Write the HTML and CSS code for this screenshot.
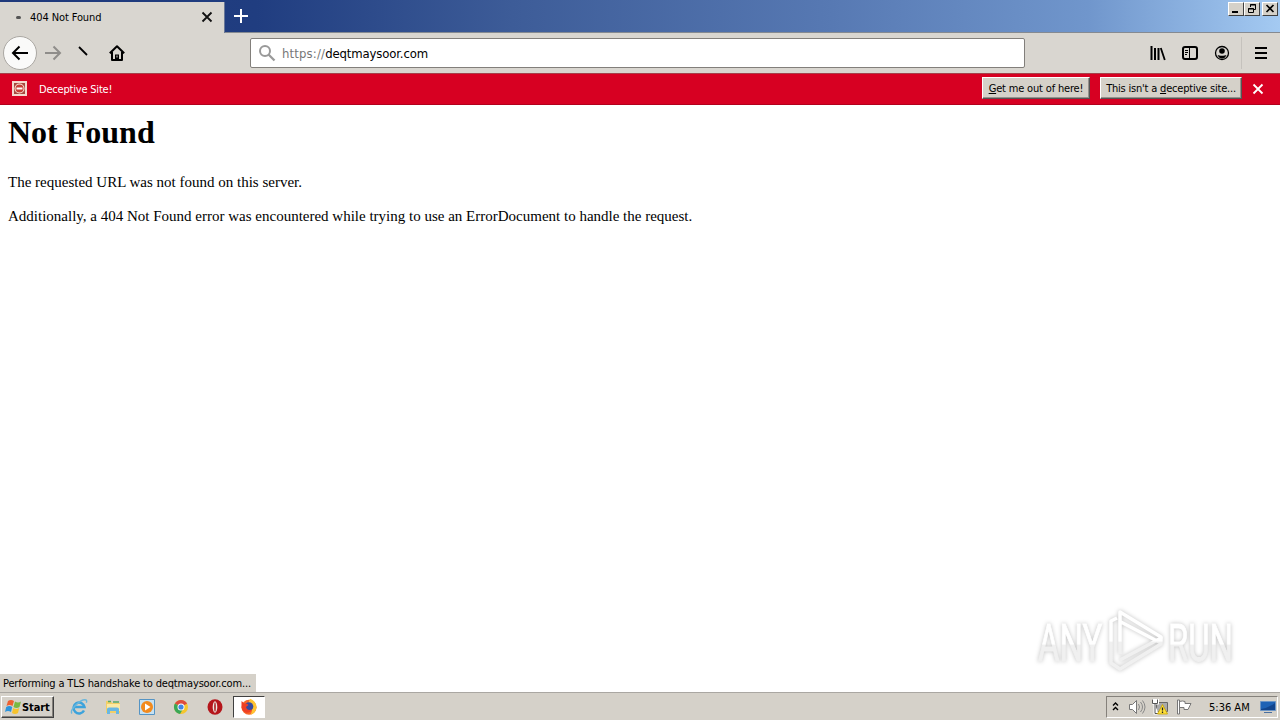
FILE: index.html
```
<!DOCTYPE html>
<html lang="en">
<head>
    <meta charset="UTF-8">
    <meta name="viewport" content="width=device-width, initial-scale=1.0">
    <title>404 Not Found</title>
    <link rel="stylesheet" href="styles.css">
</head>
<body>
    <div class="titlebar">
        <div class="tab">
            <span class="tab-dot"></span>
            <span class="tab-title">404 Not Found</span>
            <svg class="tab-close" width="12" height="12" viewBox="0 0 12 12"><path d="M1.5 1.5l9 9M10.5 1.5l-9 9" stroke="#111" stroke-width="1.8"/></svg>
        </div>
        <svg class="new-tab" width="14" height="14" viewBox="0 0 14 14"><path d="M7 0v14M0 7h14" stroke="#fff" stroke-width="2"/></svg>
        <div class="window-buttons">
            <span class="win-btn"><svg width="14" height="12" viewBox="0 0 14 12"><path d="M3 9h6" stroke="#000" stroke-width="2"/></svg></span>
            <span class="win-btn"><svg width="14" height="12" viewBox="0 0 14 12"><path d="M5.5 4V1.5h5v5H9M5 2h6M3.5 5.500h5v4h-5zM3 6h6" fill="none" stroke="#000"/></svg></span>
            <span class="win-btn win-close"><svg width="14" height="12" viewBox="0 0 14 12"><path d="M3.500 2l7 7M10.500 2l-7 7" stroke="#000" stroke-width="1.7"/></svg></span>
        </div>
    </div>

    <div class="toolbar">
        <span class="back-btn"><svg width="18" height="16" viewBox="0 0 18 16"><path d="M17 8H2M8.500 1.500L2 8l6.500 6.500" fill="none" stroke="#000" stroke-width="2"/></svg></span>
        <svg class="forward" width="18" height="16" viewBox="0 0 18 16"><path d="M1 8h15M9.500 1.500L16 8l-6.500 6.500" fill="none" stroke="#8f8d8a" stroke-width="2"/></svg>
        <svg class="reload" width="10" height="10" viewBox="0 0 10 10"><path d="M1 1l8 8" stroke="#000" stroke-width="1.8"/></svg>
        <svg class="home" width="16" height="16" viewBox="0 0 16 16"><path d="M.8 8.200L8 1.200l7.200 7M3 7v8h10V7" fill="none" stroke="#000" stroke-width="2" stroke-linejoin="round"/><path d="M6 15V9.500h4V15z"/><path d="M8 10.500v2" stroke="#d9d6d0"/></svg>
        <div class="urlbar">
            <svg width="18" height="18" viewBox="0 0 18 18"><circle cx="7" cy="7" r="5" fill="none" stroke="#999" stroke-width="2"/><path d="M10.500 10.500l6 6" stroke="#999" stroke-width="2.300"/></svg>
            <span class="url"><span class="scheme">https://</span><span class="host">deqtmaysoor.com</span></span>
        </div>
        <svg class="library" width="16" height="16" viewBox="0 0 16 16"><path d="M1.500 1v14M5 3v12M8.500 3v12" stroke="#000" stroke-width="2"/><path d="M10.800 3l4 12" stroke="#000" stroke-width="1.800"/></svg>
        <svg class="sidebar" width="16" height="14" viewBox="0 0 16 14"><rect x="1" y="1" width="14" height="12" rx="2" fill="none" stroke="#000" stroke-width="2"/><path d="M7.500 1v12M3 4.500h3M3 6.500h3M3 8.500h2" stroke="#000"/></svg>
        <svg class="account" width="16" height="16" viewBox="0 0 16 16"><circle cx="8" cy="8" r="6.500" fill="none" stroke="#000" stroke-width="1.300"/><circle cx="8" cy="6" r="2.800"/><path d="M3.500 10c2 1 7 1 9 0-1 2.500-2.500 3.500-4.500 3.500S4.500 12.500 3.500 10z"/></svg>
        <span class="separator"></span>
        <svg class="menu" width="12" height="12" viewBox="0 0 12 12"><path d="M0 1h12M0 6h12M0 11h12" stroke="#000" stroke-width="2"/></svg>
    </div>

    <div class="notification">
        <svg class="blocked" width="15" height="15" viewBox="0 0 15 15"><path d="M0 0h15v15H0z" fill="#f3d8cf"/><path d="M2 2h11v11H2z" fill="#a8473f"/><circle cx="7.500" cy="7.500" r="5" fill="#fbe9df"/><circle cx="7.500" cy="7.500" r="4" fill="#c63c35"/><path d="M4.500 7.500h6" stroke="#fff" stroke-width="2"/></svg>
        <span class="notification-text">Deceptive Site!</span>
        <button class="notice-btn leave"><span><u>G</u>et me out of here!</span></button>
        <button class="notice-btn report"><span>This isn't a <u>d</u>eceptive site...</span></button>
        <svg class="notice-close" width="12" height="12" viewBox="0 0 12 12"><path d="M1.500 1.500l9 9M10.500 1.500l-9 9" stroke="#fff" stroke-width="1.800"/></svg>
    </div>

    <div class="page">
        <h1>Not Found</h1>
        <p class="line-one">The requested URL was not found on this server.</p>
        <p class="line-two">Additionally, a 404 Not Found error was encountered while trying to use an ErrorDocument to handle the request.</p>

        <div class="watermark">
            <span class="mark-text">ANY</span>
            <svg width="60" height="64" viewBox="0 0 60 64">
                <defs>
                    <linearGradient id="fade" gradientUnits="userSpaceOnUse" x1="0" y1="0" x2="0" y2="64">
                        <stop offset="0.5" stop-color="#fff"/>
                        <stop offset="0.52" stop-color="#f0f0f0"/>
                    </linearGradient>
                </defs>
                <g fill="none" stroke="url(#fade)" stroke-width="3.500" stroke-linejoin="round">
                    <path d="M13 45V3l41 25-2 5-38-20"/>
                    <path d="M10 9l-6 3v42l9 6 41-25v-6L13 51"/>
                </g>
            </svg>
            <span class="mark-text">RUN</span>
        </div>
        <div class="status"><span>Performing a TLS handshake to deqtmaysoor.com...</span></div>
    </div>

    <div class="taskbar">
        <div class="start">
            <svg width="17" height="16" viewBox="0 0 17 16"><path d="M3 2q3-2 6 0L7.500 7q-3-2-6 0z" fill="#ed6131"/><path d="M10 2.500q3 2 6 0L14.500 8q-3 2-6 0z" fill="#79b943"/><path d="M1.200 8q3-2 6 0L6 13q-3-2-6 0z" fill="#2b94dc"/><path d="M8.200 9q3 2 6 0L13 14q-3 2-6 0z" fill="#f6c32d"/></svg>
            <span>Start</span>
        </div>
        <div class="quick-launch">
            <svg width="18" height="18" viewBox="0 0 18 18"><path d="M14 12.500A5.500 5.500 0 1 1 14.500 9H5" fill="none" stroke="#3ca3dc" stroke-width="2.500"/><path d="M2 15.500C-1 12 11 .5 16 2c1 .5.800 1.500.3 2.700" fill="none" stroke="#69b6dc" stroke-width="1.400"/></svg>
            <svg width="18" height="18" viewBox="0 0 18 18"><path d="M2 3h5l1 2h8v10H2z" fill="#f2cf67"/><path d="M3 6h13v7H3z" fill="#fbe9a4"/><path d="M4 3.500h3M9 4h6" stroke="#58a866" stroke-width="1.500"/><path d="M3 16v-5q0-1.500 2-1.500h8q2 0 2 1.500v5h-3v-3H6v3z" fill="#69b7e3"/></svg>
            <svg width="18" height="18" viewBox="0 0 18 18"><path d="M1.500 1.500h15v15h-15z" fill="#c6e1f2" stroke="#5594c4"/><circle cx="9" cy="9" r="6" fill="#f28a1d"/><path d="M7 5.500v7L12.500 9z" fill="#fff"/></svg>
            <svg width="18" height="18" viewBox="0 0 18 18"><circle cx="9" cy="9" r="7" fill="#f5c62e"/><path d="M9 9L2.900 5.500a7 7 0 0 1 12.200 0z" fill="#dd4b3e"/><path d="M9 9L2.900 5.500A7 7 0 0 0 8 16l3-5z" fill="#3aa757"/><circle cx="9" cy="9" r="3.500" fill="#fff"/><circle cx="9" cy="9" r="2.600" fill="#4285e4"/></svg>
            <svg width="18" height="18" viewBox="0 0 18 18"><ellipse cx="9" cy="9" rx="7.500" ry="7.800" fill="#b5161b"/><ellipse cx="9" cy="9" rx="2.300" ry="5.800" fill="#eee8e2"/><ellipse cx="9" cy="9" rx=".8" ry="4.800" fill="#a61919"/></svg>
        </div>
        <div class="task-active">
            <svg width="18" height="18" viewBox="0 0 18 18"><circle cx="9" cy="9.300" r="7.500" fill="#f7662a"/><path d="M10 .8q7 3 6.500 9-1 6-6 7 4-7-2-12z" fill="#ffc431"/><circle cx="9" cy="8.500" r="4.300" fill="#374aa0"/><path d="M1.500 9V3l3 2.500q3-.5 4 1.500L6 9q1 4 6 2.500-2 4-6.500 3Q2 13 1.500 9z" fill="#ee3f24"/></svg>
        </div>
        <div class="tray">
            <svg class="chevrons" width="7" height="10" viewBox="0 0 7 10"><path d="M1 4.500L3.500 2 6 4.500M1 9l2.500-2.500L6 9" fill="none" stroke="#000" stroke-width="1.400"/></svg>
            <svg class="volume" width="18" height="16" viewBox="0 0 18 16"><path d="M1.500 5.500h3l4-4v13l-4-4h-3z" fill="#fff" stroke="#777"/><path d="M10.500 5q2 3 0 6M12.500 3q4 5 0 10M14.500 1.500q5 6.500 0 13" fill="none" stroke="#888"/></svg>
            <svg class="network" width="16" height="16" viewBox="0 0 16 16"><path d="M4.500 3.500h11v9h-11z" fill="#aaa" stroke="#666"/><path d="M1 1h5v3.500H1zM2.500 4.500v10h4" fill="#fff" stroke="#fff" stroke-width="2"/><path d="M.5.500v4h5v-4M3 4.500v10h4" fill="none" stroke="#555"/><path d="M10.500 5.500l5 9.500h-10z" fill="#ffe13b" stroke="#c5a100" stroke-width=".8"/><path d="M10.500 8.500v3M10.500 12.500v1.500" stroke="#222" stroke-width="1.300"/></svg>
            <svg class="flag" width="17" height="16" viewBox="0 0 17 16"><path d="M3 2.500q4-1 6 0v2h6l-3 6H8v-2H3z" fill="#fff" stroke="#777"/><path d="M1.500 1h2v14h-2z" fill="#fff" stroke="#777"/></svg>
            <span class="clock">5:36 AM</span>
            <svg class="desktop" width="16" height="14" viewBox="0 0 16 14"><path d="M.5 1.500h15v9H.5z" fill="#1e62b5" stroke="#6b94c5"/><path d="M1 9q7-1 14-6v7H1z" fill="#12458d"/><path d="M4 12.500h8" stroke="#4a6f9f"/></svg>
        </div>
    </div>
</body>
</html>
```
FILE: styles.css
```
* {
    box-sizing: border-box;
}

body {
    margin: 0;
    width: 1280px;
    height: 720px;
    overflow: hidden;
    display: flex;
    flex-direction: column;
    background-color: #fff;
    color: #000;
    font-family: Tahoma, 'DejaVu Sans Condensed', 'DejaVu Sans', sans-serif;
    font-size: 11px;
}

svg {
    display: block;
    flex: none;
}

span {
    white-space: nowrap;
}

.titlebar {
    height: 33px;
    flex: none;
    display: flex;
    align-items: flex-start;
    background-image: linear-gradient(90deg, #1f397b 0%, #203d80 20%, #3d5c98 40%, #5779b3 65%, #7096cc 85%, #a4caf2 100%);
    border-bottom: 1px solid #858a91;
}

.tab {
    width: 225px;
    height: 31px;
    margin-top: 2px;
    padding: 0 11px 1px 16px;
    display: flex;
    align-items: center;
    background-color: #d9d6d0;
    border-right: 1px solid #687797;
}

.tab-dot {
    width: 5px;
    height: 3px;
    border-radius: 2px;
    background-color: #555;
    margin-right: 9px;
}

.tab-title {
    letter-spacing: -0.1px;
}

.tab-close {
    margin-left: auto;
}

.new-tab {
    margin: 9px 0 0 9px;
}

.window-buttons {
    display: flex;
    margin: 2px 2px 0 auto;
}

.win-btn {
    width: 16px;
    height: 14px;
    background-color: #d5d1c9;
    border: 1px solid;
    border-color: #fff #404040 #404040 #fff;
}

.win-close {
    margin-left: 2px;
}

.toolbar {
    height: 40px;
    flex: none;
    display: flex;
    align-items: center;
    background-color: #d9d6d0;
}

.back-btn {
    width: 34px;
    height: 34px;
    margin-left: 3px;
    display: flex;
    align-items: center;
    justify-content: center;
    border-radius: 50%;
    background-color: #fafaf9;
    border: 1px solid #aaa7a2;
}

.forward {
    margin-left: 7px;
}

.reload {
    margin: 0 0 5px 16px;
}

.home {
    margin-left: 21px;
}

.urlbar {
    width: 775px;
    height: 30px;
    margin-left: 125px;
    padding-left: 7px;
    display: flex;
    align-items: center;
    background-color: #fff;
    border: 1px solid #827f7b;
    border-radius: 2px;
}

.url {
    margin-left: 6px;
    font-size: 13px;
    letter-spacing: -0.13px;
}

.scheme {
    color: #777;
    letter-spacing: 0.15px;
}

.library {
    margin-left: 125px;
}

.sidebar {
    margin-left: 16px;
}

.account {
    margin-left: 16px;
}

.separator {
    width: 1px;
    height: 32px;
    margin-left: 11px;
    background-color: #c5c2bd;
}

.menu {
    margin-left: 13px;
}

.notification {
    height: 32px;
    flex: none;
    display: flex;
    align-items: center;
    background-color: #d70022;
    border-top: 1px solid #a6404a;
    border-bottom: 1px solid #b2001c;
    color: #fff;
}

.blocked {
    margin: 0 0 1px 12px;
}

.notification-text {
    margin-left: 12px;
    letter-spacing: -0.2px;
}

.notice-btn {
    height: 22px;
    margin-bottom: 2px;
    padding: 0;
    background-color: #d5d1c9;
    border: 1px solid;
    border-color: #fff #555 #555 #fff;
    box-shadow: inset -1px -1px #96918b;
    color: #000;
    font: inherit;
    letter-spacing: -0.17px;
}

.leave {
    width: 108px;
    margin-left: auto;
}

.report {
    width: 142px;
    margin: 0 10px 2px;
    letter-spacing: -0.2px;
}

.notice-close {
    margin-right: 16px;
}

.page {
    position: relative;
    flex: 1;
    padding: 0 8px;
    font-family: 'Liberation Serif', serif;
    font-size: 15px;
}

.page h1 {
    margin: 9px 0 0;
    font-size: 32px;
    line-height: 37px;
}

.page p {
    margin: 0;
    line-height: 18px;
    white-space: nowrap;
}

.page .line-one {
    margin-top: 22px;
}

.page .line-two {
    margin-top: 16px;
}

.watermark {
    position: absolute;
    left: 1038px;
    top: 504px;
    display: flex;
    align-items: center;
    filter: drop-shadow(0 0 2px rgba(0, 0, 0, 0.25));
}

.watermark svg {
    margin: 0 1px 0 5px;
}

/* wide glyphs squeezed into a 64px slot */
.mark-text {
    width: 104px;
    margin-right: -40px;
    font-family: Roboto, 'Liberation Sans', sans-serif;
    font-size: 51px;
    line-height: 62px;
    color: transparent;
    background-image: linear-gradient(#fff 50%, #f0f0f0 52%);
    -webkit-background-clip: text;
    background-clip: text;
    -webkit-text-stroke: 1px transparent;
    transform-origin: left center;
    transform: translateY(3px) scaleX(0.645);
}

.status {
    position: absolute;
    left: 0;
    bottom: 0;
    width: 256px;
    height: 18px;
    padding-left: 3px;
    background-color: #d5d1c9;
    font-family: Tahoma, 'DejaVu Sans Condensed', 'DejaVu Sans', sans-serif;
    font-size: 11px;
    line-height: 20px;
    letter-spacing: -0.16px;
}

.taskbar {
    height: 28px;
    flex: none;
    display: flex;
    align-items: center;
    padding: 1px 2px 0 1px;
    background-color: #d5d1c9;
    border-top: 1px solid #aaa7a2;
}

.start {
    width: 53px;
    height: 22px;
    padding-left: 3px;
    display: flex;
    align-items: center;
    border: 1px solid;
    border-color: #fff #404040 #404040 #fff;
    box-shadow: inset -1px -1px #85817b;
    font-weight: bold;
}

.start span {
    letter-spacing: -0.1px;
}

.quick-launch {
    display: flex;
    gap: 16px;
    margin-left: 16px;
}

.task-active {
    width: 32px;
    height: 22px;
    margin-left: 9px;
    display: flex;
    align-items: center;
    justify-content: center;
    background-color: #fff;
    border: 1px solid;
    border-color: #404040 #fff #fff #404040;
}

.tray {
    width: 172px;
    height: 22px;
    margin-left: auto;
    padding-left: 5px;
    display: flex;
    align-items: center;
    border: 1px solid;
    border-color: #85817b #fff #fff #85817b;
}

.chevrons {
    margin-bottom: 3px;
}

.volume {
    margin-left: 9px;
}

.network {
    margin-left: 6px;
}

.flag {
    margin-left: 8px;
}

.clock {
    width: 42px;
    margin: 0 9px 0 16px;
}
```
